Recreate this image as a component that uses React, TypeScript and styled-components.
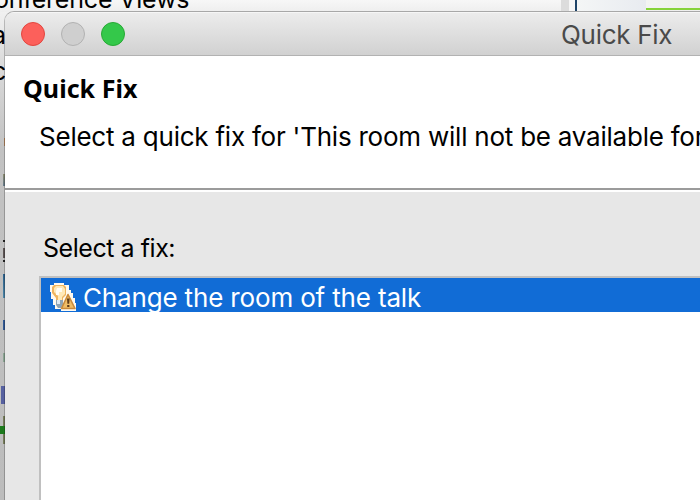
import React from "react";
import styled, { createGlobalStyle } from "styled-components";

const Global = createGlobalStyle`
  * { box-sizing: border-box; }
  html, body { margin: 0; overflow: hidden; }
`;

const Desktop = styled.div`
  position: relative;
  width: 700px;
  height: 500px;
  overflow: hidden;
  background: linear-gradient(180deg, #f7f7f7 0, #f0f0f0 14px, #dcdcdc 60px, #c2c2c2 150px, #bcbcbc 100%);
  font-family: Inter, "Liberation Sans", sans-serif;
  color: #000;
`;

const BackStrip = styled.div`
  display: flex;
  height: 12px;
  background: linear-gradient(#f7f7f7, #eeeeee);
`;
const BackTree = styled.div`
  width: 561px;
`;
const Sash = styled.div`
  width: 8px;
  background: #dcdcdc;
`;
const SashGap = styled.div`
  width: 6px;
  background: #f6f6f6;
`;
const EditorEdge = styled.div`
  width: 2px;
  background: #1f4468;
`;
const EditorPane = styled.div`
  width: 69px;
  background: linear-gradient(90deg, #f4f6f6, #e8ebf0);
`;
const Marked = styled.div`
  width: 54px;
  height: 10px;
  background: linear-gradient(90deg, #f2f4f2, #ebf0e8);
  border-bottom: 2px solid #85d338;
`;

const BackLabel = styled.span<{ $x: number; $y: number }>`
  position: absolute;
  left: ${(p) => p.$x}px;
  top: ${(p) => p.$y}px;
  font-size: 25px;
  line-height: 30px;
  letter-spacing: -0.2px;
  white-space: nowrap;
`;

const Sliver = styled.span<{ $y: number; $h: number; $c: string; $x?: number }>`
  position: absolute;
  left: ${(p) => p.$x ?? 3}px;
  top: ${(p) => p.$y}px;
  width: 5px;
  height: ${(p) => p.$h}px;
  background: ${(p) => p.$c};
`;

const Dialog = styled.div`
  position: absolute;
  left: 4px;
  top: 11px;
  width: 1240px;
  height: 600px;
  display: flex;
  flex-direction: column;
  border: 1px solid #a8a8a8;
  border-left-color: rgba(0, 0, 0, 0.22);
  border-radius: 10px 0 0 0;
  overflow: hidden;
  background: #e7e7e7;
  background-clip: padding-box;
`;
const TitleBar = styled.div`
  display: flex;
  flex: none;
  align-items: center;
  height: 44px;
  padding-left: 16px;
  background: linear-gradient(#ececec, #d1d1d1);
  border-top: 1px solid #f6f6f6;
  border-bottom: 1px solid #b2b2b2;
`;
const Lights = styled.div`
  display: flex;
  gap: 16px;
  width: 540px;
`;
const Light = styled.span<{ $fill: string; $ring: string }>`
  width: 24px;
  height: 24px;
  border-radius: 50%;
  background: ${(p) => p.$fill};
  border: 1px solid ${(p) => p.$ring};
`;
const Title = styled.span`
  color: #4a4a4a;
  font-size: 26px;
  line-height: 32px;
  letter-spacing: -0.3px;
  padding-top: 1px;
`;
const Header = styled.header`
  flex: none;
  height: 134px;
  padding: 16px 0 0 18px;
  background: #fff;
  border-bottom: 2px solid #9b9b9b;
`;
const Heading = styled.h1`
  margin: 0;
  font: 700 25px/32px "Noto Sans", sans-serif;
  letter-spacing: 0.05px;
`;
const Message = styled.p`
  margin: 17px 0 0 16px;
  font-size: 26px;
  line-height: 32px;
  letter-spacing: -0.23px;
  white-space: nowrap;
`;
const Body = styled.main`
  flex: 1;
  padding: 40px 0 0 34px;
  border-top: 2px solid #fff;
`;
const FixLabel = styled.div`
  padding-left: 4px;
  height: 44px;
  font-size: 25px;
  line-height: 32px;
  letter-spacing: -0.45px;
`;
const FixList = styled.div`
  height: 400px;
  background: #fff;
  border: 2px solid #c0c0c0;
`;
const FixRow = styled.div`
  display: flex;
  align-items: center;
  height: 34px;
  padding: 4px 0 0 9px;
  background: #116cd6;
  color: #fff;
  font-size: 26px;
  letter-spacing: -0.16px;
`;
const FixText = styled.span`
  padding-left: 7px;
`;

const FixIcon = () => (
  <svg width="26" height="28" viewBox="0 0 26 28">
    <path d="M4 0h10v2h5v5h2v3h2v5h2v5h1v8H11v-2H5v-4H3v-6H1V9H0V2h4z" fill="#fffaf0" />
    <path d="M4 2h10l2 2v8l-3 3v3H6v-3l-4-5V4z" fill="#efb55f" />
    <path d="M6 3h7l2 3v5l-3 3v3H8v-4L4 9V5z" fill="#ffe9b8" />
    <path d="M7 5h5v4H9v3H6V8z" fill="#fffdf4" />
    <path d="M6 17h7v5l-2 3H8l-2-3z" fill="#8fa4b5" />
    <path d="M7 17h3v4H7z" fill="#dfeaf2" />
    <path d="M18 11.5L25 25.5H11.5z" fill="#f0bd66" stroke="#c98a3c" strokeWidth="1.6" strokeLinejoin="round" />
    <path d="M17 15.5h2.6l-.4 5.3h-1.8zM17.2 22h2.2v2h-2.2z" fill="#5d3a18" />
  </svg>
);

export default function App() {
  return (
    <Desktop>
      <Global />
      <BackStrip>
        <BackTree /><Sash /><SashGap /><EditorEdge /><EditorPane /><Marked />
      </BackStrip>
      <BackLabel $x={-6} $y={-16}>onference Views</BackLabel>
      <BackLabel $x={-8} $y={20}>a</BackLabel>
      <BackLabel $x={-8} $y={56}>c</BackLabel>
      <Sliver $y={138} $h={8} $c="#b98a60" $x={4} />
      <Sliver $y={174} $h={12} $c="linear-gradient(#8b8b70, #667b8c)" />
      <Sliver $y={240} $h={2} $c="#222" />
      <Sliver $y={248} $h={10} $c="#5d5555" />
      <Sliver $y={260} $h={2} $c="#222" />
      <Sliver $y={274} $h={24} $c="linear-gradient(#2d618c, #4d87a9)" />
      <Sliver $y={320} $h={10} $c="#315995" />
      <Sliver $y={353} $h={9} $c="#8ba493" />
      <Sliver $y={386} $h={18} $c="#5761a0" $x={1} />
      <Sliver $y={416} $h={28} $c="#777d5b" />
      <Sliver $y={426} $h={8} $c="#1c7a1c" $x={0} />
      <Dialog>
        <TitleBar>
          <Lights>
            <Light $fill="#fc605b" $ring="#e2463f" />
            <Light $fill="#cfcfcf" $ring="#b2b2b2" />
            <Light $fill="#34c84a" $ring="#28a935" />
          </Lights>
          <Title>Quick Fix</Title>
        </TitleBar>
        <Header>
          <Heading>Quick Fix</Heading>
          <Message>Select a quick fix for 'This room will not be available for</Message>
        </Header>
        <Body>
          <FixLabel>Select a fix:</FixLabel>
          <FixList>
            <FixRow>
              <FixIcon />
              <FixText>Change the room of the talk</FixText>
            </FixRow>
          </FixList>
        </Body>
      </Dialog>
    </Desktop>
  );
}
